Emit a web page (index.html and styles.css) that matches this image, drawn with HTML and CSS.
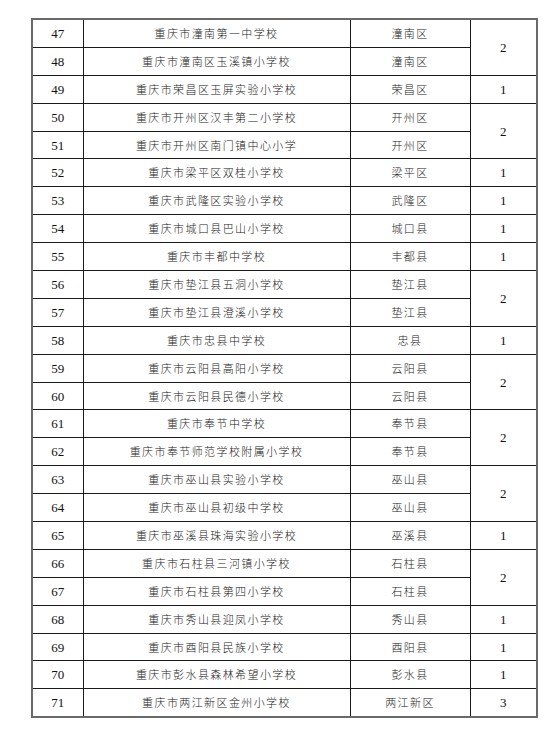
FILE: index.html
```html
<!DOCTYPE html>
<html lang="zh-CN">
<head>
<meta charset="utf-8">
<title>学校名单</title>
<link rel="stylesheet" href="styles.css">
</head>
<body>
<table class="list">
<colgroup><col class="c-no"><col class="c-name"><col class="c-dist"><col class="c-cnt"></colgroup>
<tbody>
<tr><td class="no">47</td><td class="cn">重庆市潼南第一中学校</td><td class="cn">潼南区</td><td class="cnt" rowspan="2">2</td></tr>
<tr><td class="no">48</td><td class="cn">重庆市潼南区玉溪镇小学校</td><td class="cn">潼南区</td></tr>
<tr><td class="no">49</td><td class="cn">重庆市荣昌区玉屏实验小学校</td><td class="cn">荣昌区</td><td class="cnt">1</td></tr>
<tr><td class="no">50</td><td class="cn">重庆市开州区汉丰第二小学校</td><td class="cn">开州区</td><td class="cnt" rowspan="2">2</td></tr>
<tr><td class="no">51</td><td class="cn">重庆市开州区南门镇中心小学</td><td class="cn">开州区</td></tr>
<tr><td class="no">52</td><td class="cn">重庆市梁平区双桂小学校</td><td class="cn">梁平区</td><td class="cnt">1</td></tr>
<tr><td class="no">53</td><td class="cn">重庆市武隆区实验小学校</td><td class="cn">武隆区</td><td class="cnt">1</td></tr>
<tr><td class="no">54</td><td class="cn">重庆市城口县巴山小学校</td><td class="cn">城口县</td><td class="cnt">1</td></tr>
<tr><td class="no">55</td><td class="cn">重庆市丰都中学校</td><td class="cn">丰都县</td><td class="cnt">1</td></tr>
<tr><td class="no">56</td><td class="cn">重庆市垫江县五洞小学校</td><td class="cn">垫江县</td><td class="cnt" rowspan="2">2</td></tr>
<tr><td class="no">57</td><td class="cn">重庆市垫江县澄溪小学校</td><td class="cn">垫江县</td></tr>
<tr><td class="no">58</td><td class="cn">重庆市忠县中学校</td><td class="cn">忠县</td><td class="cnt">1</td></tr>
<tr><td class="no">59</td><td class="cn">重庆市云阳县高阳小学校</td><td class="cn">云阳县</td><td class="cnt" rowspan="2">2</td></tr>
<tr><td class="no">60</td><td class="cn">重庆市云阳县民德小学校</td><td class="cn">云阳县</td></tr>
<tr><td class="no">61</td><td class="cn">重庆市奉节中学校</td><td class="cn">奉节县</td><td class="cnt" rowspan="2">2</td></tr>
<tr><td class="no">62</td><td class="cn">重庆市奉节师范学校附属小学校</td><td class="cn">奉节县</td></tr>
<tr><td class="no">63</td><td class="cn">重庆市巫山县实验小学校</td><td class="cn">巫山县</td><td class="cnt" rowspan="2">2</td></tr>
<tr><td class="no">64</td><td class="cn">重庆市巫山县初级中学校</td><td class="cn">巫山县</td></tr>
<tr><td class="no">65</td><td class="cn">重庆市巫溪县珠海实验小学校</td><td class="cn">巫溪县</td><td class="cnt">1</td></tr>
<tr><td class="no">66</td><td class="cn">重庆市石柱县三河镇小学校</td><td class="cn">石柱县</td><td class="cnt" rowspan="2">2</td></tr>
<tr><td class="no">67</td><td class="cn">重庆市石柱县第四小学校</td><td class="cn">石柱县</td></tr>
<tr><td class="no">68</td><td class="cn">重庆市秀山县迎凤小学校</td><td class="cn">秀山县</td><td class="cnt">1</td></tr>
<tr><td class="no">69</td><td class="cn">重庆市酉阳县民族小学校</td><td class="cn">酉阳县</td><td class="cnt">1</td></tr>
<tr><td class="no">70</td><td class="cn">重庆市彭水县森林希望小学校</td><td class="cn">彭水县</td><td class="cnt">1</td></tr>
<tr><td class="no">71</td><td class="cn">重庆市两江新区金州小学校</td><td class="cn">两江新区</td><td class="cnt">3</td></tr>
</tbody>
</table>
</body>
</html>
```

FILE: styles.css
```css
html, body {
  margin: 0;
  padding: 0;
  background: #ffffff;
}
body {
  padding: 18px 0 0 31px;
  font-family: "Liberation Serif", "Noto Sans CJK SC", serif;
  color: #111;
}
.list {
  border-collapse: collapse;
  table-layout: fixed;
  width: 505px;
  border: 2px solid #6a6a6a;
}
.c-no { width: 51px; }
.c-name { width: 267px; }
.c-dist { width: 120px; }
.c-cnt { width: 67px; }
.list td {
  border: 1px solid #1a1a1a;
  height: 26.9px;
  padding: 0;
  text-align: center;
  vertical-align: middle;
  line-height: 1;
}
.no, .cnt {
  font-family: "Liberation Serif", serif;
  font-size: 13px;
}
.cn {
  font-family: "Noto Sans CJK SC", sans-serif;
  font-size: 11px;
  letter-spacing: 1.4px;
  font-weight: 300;
  color: #222;
}
```
